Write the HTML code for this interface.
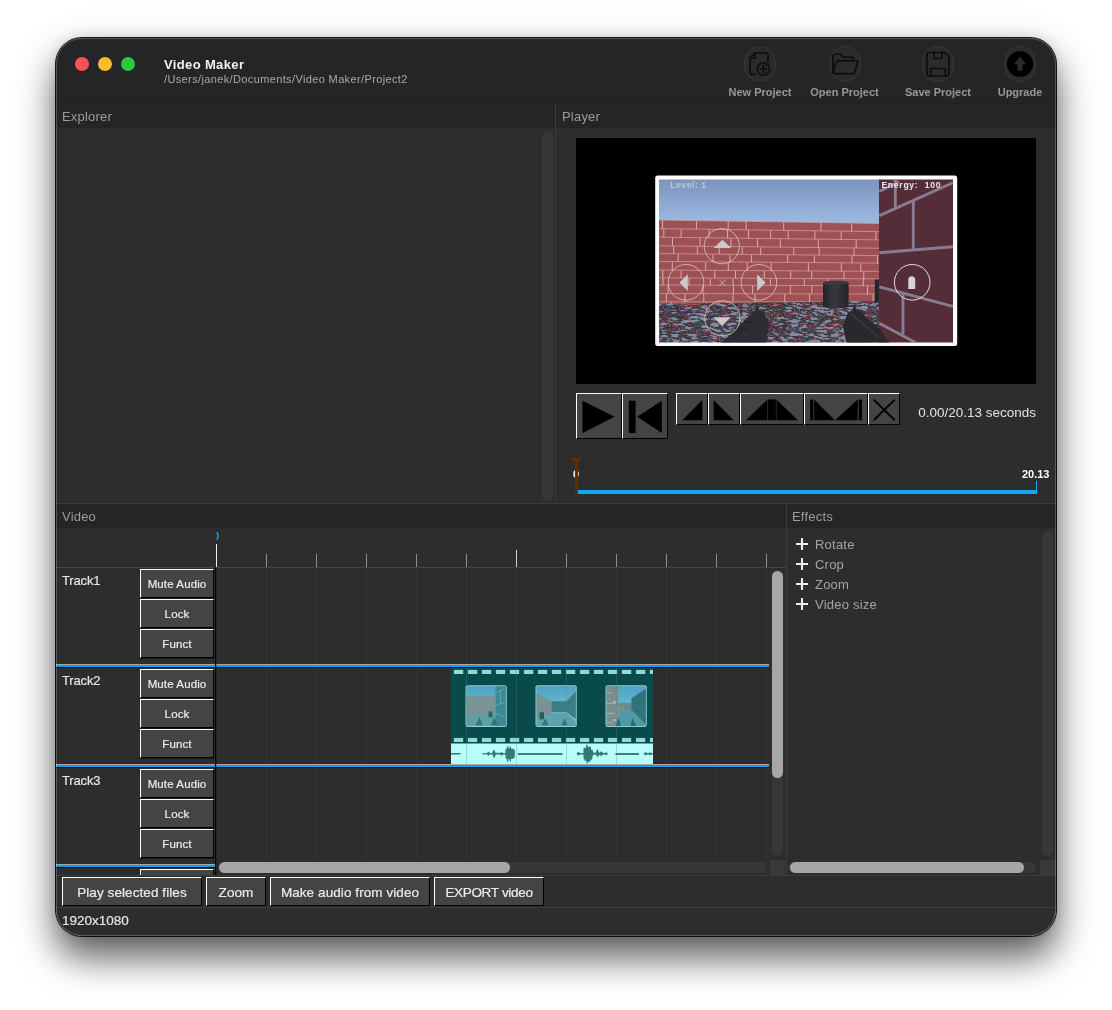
<!DOCTYPE html>
<html lang="en"><head><meta charset="utf-8"><title>Video Maker</title>
<style>
html,body{margin:0;padding:0;background:#fff;}
body{width:1112px;height:1010px;position:relative;overflow:hidden;font-family:"Liberation Sans",sans-serif;}
#win{position:absolute;left:56px;top:38px;width:1000px;height:898px;border-radius:26px;background:#2d2d2d;overflow:hidden;will-change:transform;
}
#shadow{position:absolute;left:56px;top:38px;width:1000px;height:898px;border-radius:26px;
 box-shadow:0 0 0 1px rgba(0,0,0,.9),0 22px 36px rgba(0,0,0,.6),0 0 14px rgba(0,0,0,.12),0 6px 50px rgba(0,0,0,.08);}
#rim{position:absolute;left:0;top:0;width:998px;height:896px;border-radius:26px;border:1px solid rgba(255,255,255,.22);pointer-events:none;z-index:50}
.abs{position:absolute}
#titlebar{left:0;top:0;width:1000px;height:65px;background:#232527;border-bottom:1px solid #1d1f20}
.tl{width:14px;height:14px;border-radius:50%;top:19px}
.hdr{background:#252525;height:24px;color:#9b9b9b;font-size:13px;line-height:26px;text-indent:6px;letter-spacing:.2px;overflow:hidden}
.line{background:#3c3c3c}
.btn{background:#444;box-sizing:border-box;border-top:1px solid #fff;border-left:1px solid #fff;border-right:1px solid #000;border-bottom:1px solid #000;color:#ececec;text-align:center;white-space:nowrap}
.tbtn{font-size:11.5px;letter-spacing:.12px;line-height:29px;-webkit-text-stroke:.2px #ececec;overflow:hidden;width:74px;height:29px;left:84px;box-shadow:0 1px 0 rgba(0,0,0,.45)}
.bbtn{font-size:13.5px;line-height:29px;overflow:hidden;letter-spacing:.08px;-webkit-text-stroke:.2px #ececec;height:29px;top:839px}
.track{left:6px;color:#e4e4e4;font-size:13px;letter-spacing:-.15px;-webkit-text-stroke:.2px #e4e4e4;}
.tlab{color:#989898;font-size:11px;font-weight:bold;top:48px;white-space:nowrap;transform:translateX(-50%)}
.fx{left:759px;color:#a4a4a4;font-size:13px;white-space:nowrap;letter-spacing:.22px;margin-top:1px}
.sb{background:#373737;border-radius:6px}
.thumb{background:#a6a6a6;border-radius:6px}
</style></head>
<body>
<div id="shadow"></div>
<div id="win">
<div id="titlebar" class="abs"></div>
<div class="abs tl" style="left:19px;background:#ff5257"></div>
<div class="abs tl" style="left:42px;background:#fdbc2e"></div>
<div class="abs tl" style="left:65px;background:#28c840"></div>
<div class="abs" style="left:108px;top:19px;font-size:13px;font-weight:bold;color:#f2f2f2;white-space:nowrap;letter-spacing:.36px">Video Maker</div>
<div class="abs" style="left:108px;top:35px;font-size:11px;color:#a9a9a9;white-space:nowrap;letter-spacing:.37px">/Users/janek/Documents/Video Maker/Project2</div>
<div class="abs" style="left:688px;top:8px;width:30px;height:34px;border-radius:16px;background:#292b2d;border:1px solid #35383a"></div>
<svg class="abs" style="left:688px;top:8px" width="32" height="36" viewBox="-16 -18 32 36" fill="none" stroke="#0c0c0c" stroke-width="1.6" stroke-linejoin="round" stroke-linecap="round"><path d="M-4.6 10.4 H-8 a2 2 0 0 1 -2 -2 V-6 L-5 -11 H6 a2 2 0 0 1 2 2 V-2.4"/><path d="M-9.8 -5.8 H-4.8 V-10.8"/><circle cx="3.3" cy="5" r="6.2"/><path d="M3.3 1.6 V8.4 M-0.1 5 H6.7"/></svg>
<div class="abs tlab" style="left:704px">New Project</div>
<div class="abs" style="left:772.5px;top:8px;width:30px;height:34px;border-radius:16px;background:#292b2d;border:1px solid #35383a"></div>
<svg class="abs" style="left:772.5px;top:8px" width="32" height="36" viewBox="-16 -18 32 36" fill="none" stroke="#0c0c0c" stroke-width="1.6" stroke-linejoin="round" stroke-linecap="round"><path d="M-12 8.5 V-8 a1.8 1.8 0 0 1 1.8 -1.8 H-5 L-2.5 -7 H6.5 a1.8 1.8 0 0 1 1.8 1.8 V-3.2"/><path d="M-12 8.5 L-8.6 -2 a1.8 1.8 0 0 1 1.7 -1.2 H11.6 a1.2 1.2 0 0 1 1.1 1.6 L9.6 8.4 a1.8 1.8 0 0 1 -1.7 1.2 H-10.8 a1.2 1.2 0 0 1 -1.2 -1.1 Z"/></svg>
<div class="abs tlab" style="left:788.5px">Open Project</div>
<div class="abs" style="left:866px;top:8px;width:30px;height:34px;border-radius:16px;background:#292b2d;border:1px solid #35383a"></div>
<svg class="abs" style="left:866px;top:8px" width="32" height="36" viewBox="-16 -18 32 36" fill="none" stroke="#0c0c0c" stroke-width="1.6" stroke-linejoin="round" stroke-linecap="round"><path d="M-11 -9.5 a2 2 0 0 1 2 -2 H7 L11 -7.5 V10 a2 2 0 0 1 -2 2 H-9 a2 2 0 0 1 -2 -2 Z"/><path d="M-4 -11.5 V-5.5 H4 V-11.5"/><path d="M-7.5 12 V4.5 H7.5 V12"/></svg>
<div class="abs tlab" style="left:882px">Save Project</div>
<div class="abs" style="left:948px;top:8px;width:30px;height:34px;border-radius:16px;background:#292b2d;border:1px solid #35383a"></div>
<svg class="abs" style="left:948px;top:8px" width="32" height="36" viewBox="-16 -18 32 36" fill="none" stroke="#0c0c0c" stroke-width="1.6" stroke-linejoin="round" stroke-linecap="round"><circle cx="0" cy="0" r="13" fill="#000" stroke="none"/><path d="M0 -7.5 L6.2 0.3 H2.7 V6.8 H-2.7 V0.3 H-6.2 Z" fill="#292b2d" stroke="none"/></svg>
<div class="abs tlab" style="left:964px">Upgrade</div>
<div class="abs hdr" style="left:0;top:66px;width:499px">Explorer</div>
<div class="abs hdr" style="left:500px;top:66px;width:500px">Player</div>
<div class="abs line" style="left:499px;top:66px;width:1px;height:399px"></div>
<div class="abs sb" style="left:486px;top:93px;width:11px;height:370px"></div>
<div class="abs" style="left:520px;top:100px;width:460px;height:246px;background:#000"></div>
<svg class="abs" style="left:599px;top:137px" width="303" height="172" viewBox="655 175 303 172" font-family="Liberation Sans, sans-serif"><defs><linearGradient id="sky" x1="0" y1="0" x2="0" y2="1"><stop offset="0" stop-color="#7b93bd"/><stop offset="1" stop-color="#9dbbe2"/></linearGradient><pattern id="brk" patternUnits="userSpaceOnUse" x="659" y="220" width="27" height="16"><rect width="27" height="16" fill="#9d5154"/><path d="M0 0.5 H27 M0 8.5 H27" stroke="#cfa09d" stroke-width=".7"/><path d="M4.5 1 V8 M18 9 V16" stroke="#e0bab4" stroke-width=".8"/></pattern><pattern id="cob" patternUnits="userSpaceOnUse" x="659" y="300" width="11" height="7"><rect width="11" height="7" fill="#a2524e"/><ellipse cx="2.7" cy="1.7" rx="2.6" ry="1.4" fill="#5a606c"/><ellipse cx="2.4" cy="1.3" rx="1.6" ry=".6" fill="#8f99a8"/><ellipse cx="8.2" cy="5.2" rx="2.6" ry="1.4" fill="#4e535e"/><ellipse cx="7.9" cy="4.8" rx="1.6" ry=".6" fill="#8a94a4"/><ellipse cx="8.2" cy="1.7" rx="2.4" ry="1.3" fill="#666c78"/><ellipse cx="2.7" cy="5.2" rx="2.4" ry="1.3" fill="#5f6570"/></pattern><filter id="cobf" x="0" y="0" width="100%" height="100%" color-interpolation-filters="sRGB"><feTurbulence type="turbulence" baseFrequency="0.10 0.30" numOctaves="2" seed="7"/><feColorMatrix type="matrix" values="2.5 0 0 0 0  2.5 0 0 0 0  2.5 0 0 0 0  0 0 0 0 1"/><feComponentTransfer><feFuncR type="table" tableValues="0.78 0.60 0.32 0.20 0.22 0.27 0.34 0.43 0.52"/><feFuncG type="table" tableValues="0.32 0.28 0.24 0.21 0.23 0.28 0.36 0.45 0.54"/><feFuncB type="table" tableValues="0.30 0.28 0.26 0.25 0.28 0.34 0.43 0.53 0.62"/></feComponentTransfer></filter><filter id="bl" x="-5%" y="-5%" width="110%" height="110%"><feGaussianBlur stdDeviation="0.7"/></filter><linearGradient id="bar" x1="0" y1="0" x2="1" y2="0"><stop offset="0" stop-color="#232327"/><stop offset=".45" stop-color="#37373c"/><stop offset="1" stop-color="#242428"/></linearGradient><clipPath id="gc"><rect x="659" y="179.4" width="294" height="163.2"/></clipPath></defs><rect x="655.2" y="175.5" width="302" height="170.6" rx="2.5" fill="#fff"/><g clip-path="url(#gc)"><rect x="659" y="179" width="221" height="45" fill="url(#sky)"/><path d="M659 220 L879 223.4 V304 H659 Z" fill="#9d5154"/><g clip-path="url(#wc)"><path d="M659 220.0 L879 223.4 M659 228.6 L879 231.7 M659 237.2 L879 239.9 M659 245.8 L879 248.2 M659 253.6 L879 255.6 M659 261.4 L879 263.1 M659 270.0 L879 271.4 M659 277.8 L879 278.9 M659 285.0 L879 285.8 M659 293.6 L879 294.0 M659 301.8 L879 301.9" stroke="#cfa09d" stroke-width=".75" fill="none"/><path d="M662.6 220.5 V228.7 M696.6 221.0 V229.2 M728.2 221.5 V229.7 M746.1 221.7 V229.9 M783.7 222.3 V230.5 M821.0 222.9 V231.1 M851.7 223.4 V231.6 M663.8 229.1 V237.3 M681.1 229.3 V237.5 M709.2 229.7 V237.9 M727.5 230.0 V238.2 M748.5 230.2 V238.4 M770.6 230.5 V238.7 M788.2 230.8 V239.0 M814.9 231.2 V239.4 M841.2 231.5 V239.7 M875.9 232.0 V240.2 M672.5 237.8 V246.0 M700.0 238.1 V246.3 M730.9 238.5 V246.7 M757.5 238.8 V247.0 M780.4 239.1 V247.3 M818.3 239.6 V247.8 M856.2 240.0 V248.2 M673.7 246.4 V253.8 M697.4 246.6 V254.0 M719.2 246.8 V254.2 M742.3 247.1 V254.5 M760.7 247.3 V254.7 M793.8 247.6 V255.0 M819.2 247.9 V255.3 M854.0 248.3 V255.7 M678.2 254.2 V261.6 M713.0 254.5 V261.9 M730.0 254.7 V262.1 M751.5 254.9 V262.3 M787.6 255.2 V262.6 M814.4 255.4 V262.8 M852.0 255.8 V263.2 M877.4 256.0 V263.4 M672.3 261.9 V270.1 M705.7 262.2 V270.4 M728.3 262.3 V270.5 M747.2 262.5 V270.7 M771.2 262.7 V270.9 M808.4 263.0 V271.2 M841.3 263.2 V271.4 M860.8 263.4 V271.6 M662.8 270.4 V277.8 M681.1 270.5 V277.9 M714.8 270.7 V278.1 M735.5 270.9 V278.3 M764.3 271.1 V278.5 M790.7 271.2 V278.6 M811.7 271.4 V278.8 M844.1 271.6 V279.0 M863.8 271.7 V279.1 M663.1 278.2 V285.0 M688.9 278.3 V285.1 M710.4 278.4 V285.2 M733.1 278.6 V285.4 M770.5 278.7 V285.5 M804.3 278.9 V285.7 M827.7 279.0 V285.8 M863.3 279.2 V286.0 M668.1 285.4 V293.6 M703.0 285.6 V293.8 M733.5 285.7 V293.9 M752.6 285.7 V293.9 M790.4 285.9 V294.1 M811.9 285.9 V294.1 M834.3 286.0 V294.2 M867.5 286.1 V294.3 M666.3 294.0 V301.8 M684.9 294.0 V301.8 M703.8 294.1 V301.9 M733.0 294.1 V301.9 M755.1 294.2 V302.0 M784.7 294.2 V302.0 M809.5 294.3 V302.1 M836.1 294.3 V302.1 M873.2 294.4 V302.2 M671.3 302.2 V304.0 M706.5 302.2 V304.0 M727.4 302.2 V304.0 M747.6 302.2 V304.0 M783.7 302.3 V304.1 M817.9 302.3 V304.1 M840.1 302.3 V304.1 M861.1 302.3 V304.1" stroke="#e2bdb7" stroke-width=".85" fill="none"/></g><clipPath id="fc"><path d="M659 304 L879 301 V343 H659 Z"/></clipPath><g clip-path="url(#fc)"><rect x="655" y="296" width="230" height="54" filter="url(#cobf)"/></g><rect x="874.8" y="279.5" width="5" height="23" fill="#26262a"/><path d="M823 283 V306 a12.8 2.6 0 0 0 25.6 0 V283 Z" fill="url(#bar)"/><ellipse cx="835.8" cy="283" rx="12.8" ry="2.3" fill="#38383d"/><rect x="879" y="179" width="74" height="164" fill="#542d38"/><g stroke="#887b92" stroke-width="2.9" fill="none" filter="url(#bl)"><path d="M879.3 191.5 L899 181.5 M879.3 215.6 L952.9 182.8 M879.3 252.8 L952.9 246.8 M879.3 286.8 L952.9 306.4 M879.3 323.3 L916 342.8"/><path d="M895.3 179.8 V207.5 M913.3 200 V249.5 M903 293.5 V334"/></g><path d="M721 343 L755.3 310.5 L756.3 306 L758.5 306 L759.2 310 L763.7 311.5 L769.4 325.5 L765.8 343 Z" fill="#2c2c32"/><path d="M737 329 L748 329 M743 322 L752 322" stroke="#1b1b1f" stroke-width=".8"/><path d="M846.5 343 L842.8 326 L848 312.5 L852.8 310 L853.4 306 L855.3 306 L856.6 309.8 L859.5 311 L879.5 328.5 L889.5 343 Z" fill="#28282d"/><path d="M850 313 L878 337" stroke="#3c3c43" stroke-width="1.2"/></g><g fill="none" stroke="#dcc6c6" stroke-width=".9" opacity=".9"><circle cx="721.8" cy="246.2" r="17.6"/><circle cx="686" cy="282.3" r="17.8"/><circle cx="758.9" cy="282.3" r="17.8"/><circle cx="722.4" cy="318.3" r="17.6"/><path d="M719.4 279.8 L725.4 285.8 M725.4 279.8 L719.4 285.8"/></g><circle cx="912.2" cy="282.3" r="17.8" fill="none" stroke="#e6dede" stroke-width="1"/><g fill="#cacaca"><path d="M722.4 239.8 L731.2 248.1 H713.6 Z"/><path d="M679.5 282.6 L687.8 274.3 V291 Z"/><path d="M765.6 282.6 L757.2 274.3 V291 Z"/><path d="M713.3 317.2 H730.7 L722 325.9 Z"/><path d="M908.3 289 V279.8 a3.45 3.6 0 0 1 6.9 0 V289 Z" fill="#d8d4d6"/></g><text x="670.2" y="188.4" font-size="8.6" font-weight="bold" fill="#c6cbd9" letter-spacing=".55" opacity=".9">Level: 1</text><text x="881.4" y="188.4" font-size="8.6" font-weight="bold" fill="#eeeaf0" letter-spacing=".72" xml:space="preserve">Energy:  100</text></svg>
<div class="abs btn" style="left:520px;top:355px;width:46px;height:46px"></div>
<div class="abs btn" style="left:566px;top:355px;width:46px;height:46px"></div>
<div class="abs btn" style="left:620px;top:355px;width:32px;height:32px"></div>
<div class="abs btn" style="left:652px;top:355px;width:32px;height:32px"></div>
<div class="abs btn" style="left:684px;top:355px;width:64px;height:32px"></div>
<div class="abs btn" style="left:748px;top:355px;width:64px;height:32px"></div>
<div class="abs btn" style="left:812px;top:355px;width:32px;height:32px"></div>
<svg class="abs" style="left:520px;top:355px" width="330" height="50" viewBox="576 393 330 50"><path d="M582.5 400.7 L614.6 416.8 L582.5 433 Z" fill="#000"/><rect x="628.8" y="400.7" width="6.8" height="32.3" fill="#000"/><path d="M661.8 400.7 L637.2 416.8 L661.8 433 Z" fill="#000"/><path d="M682.2 420.2 H702.3 V400 Z" fill="#000"/><path d="M713.6 400 V420.2 H733.7 Z" fill="#000"/><path d="M745.9 420.3 L767.4 399.6 H776.3 L798 420.3 Z" fill="#000"/><path d="M767.6 399.6 V420.3 M776.3 399.6 V420.3" stroke="#3a3a3a" stroke-width="0.7"/><rect x="810.1" y="399.6" width="3.2" height="20.7" fill="#000"/><path d="M814.2 399.6 V420.3 H835 Z" fill="#000"/><path d="M835 420.3 H857.7 V399.6 Z" fill="#000"/><rect x="858.7" y="399.6" width="3.2" height="20.7" fill="#000"/><path d="M873.7 399.6 L894.8 420.3 M894.8 399.6 L873.7 420.3" stroke="#000" stroke-width="1.9"/></svg>
<div class="abs" style="left:800px;top:367px;width:180px;text-align:right;font-size:13.5px;color:#e2e2e2;white-space:nowrap">0.00/20.13 seconds</div>
<div class="abs" style="left:514px;top:430px;width:12px;text-align:center;font-size:11px;font-weight:bold;color:#fff">0</div>
<div class="abs" style="left:522px;top:452px;width:459px;height:4px;background:#0fa9f7;box-shadow:0 0 0 .5px #3a2a22"></div>
<div class="abs" style="left:980px;top:443px;width:1px;height:13px;background:#0fa9f7"></div>
<svg class="abs" style="left:512px;top:418px" width="16" height="40" viewBox="568 456 16 40"><path d="M569.8 458 H582.2 L578 462.6 V494 H575 V462.6 Z" fill="#5e2e08"/></svg>
<div class="abs" style="left:960px;top:430px;width:40px;text-align:center;font-size:11px;font-weight:bold;color:#fff;transform:translateX(-0.3px)">20.13</div>
<div class="abs line" style="left:0;top:465px;width:1000px;height:1px"></div>
<div class="abs hdr" style="left:0;top:466px;width:730px">Video</div>
<div class="abs hdr" style="left:731px;top:466px;width:269px;text-indent:5px">Effects</div>
<div class="abs line" style="left:730px;top:466px;width:1px;height:372px"></div>
<div class="abs" style="left:0;top:529px;width:730px;height:1px;background:#454545"></div>
<div class="abs" style="left:210px;top:516px;width:1px;height:13px;background:#8f8f8f"></div>
<div class="abs" style="left:210px;top:530px;width:1px;height:292px;background:#353535"></div>
<div class="abs" style="left:260px;top:516px;width:1px;height:13px;background:#8f8f8f"></div>
<div class="abs" style="left:260px;top:530px;width:1px;height:292px;background:#353535"></div>
<div class="abs" style="left:310px;top:516px;width:1px;height:13px;background:#8f8f8f"></div>
<div class="abs" style="left:310px;top:530px;width:1px;height:292px;background:#353535"></div>
<div class="abs" style="left:360px;top:516px;width:1px;height:13px;background:#8f8f8f"></div>
<div class="abs" style="left:360px;top:530px;width:1px;height:292px;background:#353535"></div>
<div class="abs" style="left:410px;top:516px;width:1px;height:13px;background:#8f8f8f"></div>
<div class="abs" style="left:410px;top:530px;width:1px;height:292px;background:#353535"></div>
<div class="abs" style="left:460px;top:512px;width:1px;height:17px;background:#d0d0d0"></div>
<div class="abs" style="left:460px;top:530px;width:1px;height:292px;background:#353535"></div>
<div class="abs" style="left:510px;top:516px;width:1px;height:13px;background:#8f8f8f"></div>
<div class="abs" style="left:510px;top:530px;width:1px;height:292px;background:#353535"></div>
<div class="abs" style="left:560px;top:516px;width:1px;height:13px;background:#8f8f8f"></div>
<div class="abs" style="left:560px;top:530px;width:1px;height:292px;background:#353535"></div>
<div class="abs" style="left:610px;top:516px;width:1px;height:13px;background:#8f8f8f"></div>
<div class="abs" style="left:610px;top:530px;width:1px;height:292px;background:#353535"></div>
<div class="abs" style="left:660px;top:516px;width:1px;height:13px;background:#8f8f8f"></div>
<div class="abs" style="left:660px;top:530px;width:1px;height:292px;background:#353535"></div>
<div class="abs" style="left:710px;top:516px;width:1px;height:13px;background:#8f8f8f"></div>
<div class="abs" style="left:710px;top:530px;width:1px;height:292px;background:#353535"></div>
<div class="abs" style="left:160px;top:506px;width:1px;height:23px;background:#f0f0f0"></div>
<svg class="abs" style="left:158px;top:492px" width="8" height="12" viewBox="0 0 8 12"><path d="M2.6 2.2 Q5.7 6 2.6 9.8" fill="none" stroke="#1aa2ee" stroke-width="1.4"/></svg>
<div class="abs track" style="top:535px">Track1</div>
<div class="abs btn tbtn" style="top:531px">Mute Audio</div>
<div class="abs btn tbtn" style="top:561px">Lock</div>
<div class="abs btn tbtn" style="top:591px">Funct</div>
<div class="abs" style="left:0;top:626px;width:713px;height:1px;background:#a9a4a6"></div>
<div class="abs" style="left:0;top:627px;width:713px;height:2px;background:#109ff0"></div>
<div class="abs" style="left:0;top:629px;width:713px;height:1px;background:#111"></div>
<div class="abs track" style="top:635px">Track2</div>
<div class="abs btn tbtn" style="top:631px">Mute Audio</div>
<div class="abs btn tbtn" style="top:661px">Lock</div>
<div class="abs btn tbtn" style="top:691px">Funct</div>
<div class="abs" style="left:0;top:726px;width:713px;height:1px;background:#a9a4a6"></div>
<div class="abs" style="left:0;top:727px;width:713px;height:2px;background:#109ff0"></div>
<div class="abs" style="left:0;top:729px;width:713px;height:1px;background:#111"></div>
<div class="abs track" style="top:735px">Track3</div>
<div class="abs btn tbtn" style="top:731px">Mute Audio</div>
<div class="abs btn tbtn" style="top:761px">Lock</div>
<div class="abs btn tbtn" style="top:791px">Funct</div>
<div class="abs" style="left:0;top:826px;width:159px;height:1px;background:#a9a4a6"></div>
<div class="abs" style="left:0;top:827px;width:159px;height:2px;background:#109ff0"></div>
<div class="abs" style="left:0;top:829px;width:159px;height:1px;background:#111"></div>
<div class="abs" style="left:84px;top:831px;width:74px;height:6px;overflow:hidden"><div class="abs btn tbtn" style="left:0;top:0"></div></div>
<div class="abs" style="left:159px;top:529px;width:1px;height:308px;background:#050505;box-shadow:1px 0 0 rgba(0,0,0,.22)"></div>
<svg class="abs" style="left:395px;top:630px" width="202" height="96" viewBox="451 668 202 96"><defs><clipPath id="cc"><rect x="451" y="668" width="202" height="96"/></clipPath><linearGradient id="tsky" x1="0" y1="0" x2="0" y2="1"><stop offset="0" stop-color="#4da3c4"/><stop offset="1" stop-color="#86cfdf"/></linearGradient></defs><g clip-path="url(#cc)"><rect x="451" y="668" width="202" height="76" fill="#094a4a"/><rect x="451" y="743.5" width="202" height="20.5" fill="#b9fdfd"/><rect x="453.9" y="669.9" width="9.3" height="4.1" fill="#8fdad5"/><rect x="453.9" y="737.9" width="9.3" height="4.1" fill="#8fdad5"/><rect x="467.9" y="669.9" width="9.3" height="4.1" fill="#8fdad5"/><rect x="467.9" y="737.9" width="9.3" height="4.1" fill="#8fdad5"/><rect x="481.9" y="669.9" width="9.3" height="4.1" fill="#8fdad5"/><rect x="481.9" y="737.9" width="9.3" height="4.1" fill="#8fdad5"/><rect x="495.9" y="669.9" width="9.3" height="4.1" fill="#8fdad5"/><rect x="495.9" y="737.9" width="9.3" height="4.1" fill="#8fdad5"/><rect x="509.9" y="669.9" width="9.3" height="4.1" fill="#8fdad5"/><rect x="509.9" y="737.9" width="9.3" height="4.1" fill="#8fdad5"/><rect x="523.9" y="669.9" width="9.3" height="4.1" fill="#8fdad5"/><rect x="523.9" y="737.9" width="9.3" height="4.1" fill="#8fdad5"/><rect x="537.9" y="669.9" width="9.3" height="4.1" fill="#8fdad5"/><rect x="537.9" y="737.9" width="9.3" height="4.1" fill="#8fdad5"/><rect x="551.9" y="669.9" width="9.3" height="4.1" fill="#8fdad5"/><rect x="551.9" y="737.9" width="9.3" height="4.1" fill="#8fdad5"/><rect x="565.9" y="669.9" width="9.3" height="4.1" fill="#8fdad5"/><rect x="565.9" y="737.9" width="9.3" height="4.1" fill="#8fdad5"/><rect x="579.9" y="669.9" width="9.3" height="4.1" fill="#8fdad5"/><rect x="579.9" y="737.9" width="9.3" height="4.1" fill="#8fdad5"/><rect x="593.9" y="669.9" width="9.3" height="4.1" fill="#8fdad5"/><rect x="593.9" y="737.9" width="9.3" height="4.1" fill="#8fdad5"/><rect x="607.9" y="669.9" width="9.3" height="4.1" fill="#8fdad5"/><rect x="607.9" y="737.9" width="9.3" height="4.1" fill="#8fdad5"/><rect x="621.9" y="669.9" width="9.3" height="4.1" fill="#8fdad5"/><rect x="621.9" y="737.9" width="9.3" height="4.1" fill="#8fdad5"/><rect x="635.9" y="669.9" width="9.3" height="4.1" fill="#8fdad5"/><rect x="635.9" y="737.9" width="9.3" height="4.1" fill="#8fdad5"/><rect x="649.9" y="669.9" width="9.3" height="4.1" fill="#8fdad5"/><rect x="649.9" y="737.9" width="9.3" height="4.1" fill="#8fdad5"/><g transform="translate(465.5,685.3)"><rect x="0" y="0" width="41.3" height="41.6" rx="2" fill="#8bcfcf"/><rect x="1" y="1" width="39.3" height="39.6" rx="1" fill="url(#tsky)"/><rect x="1" y="11" width="29" height="19" fill="#7a9496"/><rect x="1" y="29" width="39.3" height="11.6" fill="#5f9ea4"/><path d="M30 1 H40.3 V40.6 H30 Z" fill="#3f8890"/><path d="M30 8 L40 3 M30 20 L40 17 M30 28 L40 32 M35 5 V19" stroke="#5fb6c6" stroke-width=".7" fill="none"/><rect x="23" y="26" width="4" height="6" fill="#26666a"/><path d="M10 40 L14 32 L17 40 Z M25 40 L29 32 L32 40 Z" fill="#2f7478"/></g><g transform="translate(535.5,685.3)"><rect x="0" y="0" width="41.3" height="41.6" rx="2" fill="#8bcfcf"/><rect x="1" y="1" width="39.3" height="39.6" rx="1" fill="url(#tsky)"/><path d="M1 8 L16 16 V30 L1 34 Z" fill="#7a9294"/><path d="M16 16 H31 L40.3 6 V34 L31 27 H16 Z" fill="#3c7c84"/><path d="M1 34 L16 28 H31 L40.3 36 V40.6 H1 Z" fill="#5fa2aa"/><rect x="4" y="27" width="4.5" height="7" fill="#235f63"/><path d="M6 40 L10 33 L13 40 Z M26 40 L29 33 L32 40 Z" fill="#2f7478"/></g><g transform="translate(605.5,685.3)"><rect x="0" y="0" width="41.3" height="41.6" rx="2" fill="#8bcfcf"/><rect x="1" y="1" width="39.3" height="39.6" rx="1" fill="url(#tsky)"/><path d="M1 1 H12.5 L13.5 40.6 H1 Z" fill="#7b8e8f"/><path d="M13 17.5 H26.5 V25 H13.3 Z" fill="#6d8b8c"/><rect x="14" y="22.3" width="4.5" height="2.2" fill="#8b9a55"/><path d="M26 13 L40.3 3.5 V40 L26 27 Z" fill="#30737a"/><path d="M13.3 24.5 H26 L40.3 39 V40.6 H13.5 Z" fill="#4e9aa6"/><path d="M1 7.5 H7 M1 18 H10 M1 28 H9 M1 37 H7" stroke="#a4c4c6" stroke-width=".8"/><rect x="8" y="16" width="2" height="1.6" fill="#b9dede"/><rect x="8" y="34" width="2" height="1.6" fill="#b9dede"/><path d="M10.5 40.6 L13 32 L15.5 40.6 Z M25 40.6 L27 32.5 L30.5 40.6 Z" fill="#246d72"/></g><g fill="#347a7a"><path d="M451 753.0999999999999 H461.5 L460 754.5999999999999 H451 Z"/><path d="M481.5 753.1999999999999 H486.5 L488.5 751.8 L490 753.0 H492 L494 749.3 L495.5 752.8 H499 L500 753.3 L501.5 751.8 L503 753.0999999999999 H505.5 V748.8 H507 V746.3 H508.3 V748.3 H509.6 V746.8 H511 V748.8 H513.8 V749.8 H514.8 V757.8 H513.5 V758.8 H511 V761.3 H509.6 V759.3 H508.3 V761.8 H507 V758.8 H505.5 V754.5999999999999 H503 L501.5 755.8 L500 754.4 H496 L494 758.8 L492.5 754.5999999999999 H490 L488.5 755.8 L487 754.5999999999999 H483 Z"/><rect x="518" y="753.0999999999999" width="44.5" height="1.9"/><path d="M576.5 753.4 L578 751.8 L580 753.0 H583.5 V747.8 H586 V744.8 H587.5 V746.8 H591 V749.8 H592.5 L593.5 752.8 H595.5 L597.5 748.8 L599 752.8 L601.5 751.3 L603 753.0 H605 L606.5 752.3 L608 753.8 L606.5 755.3 L605 754.5999999999999 H603 L601.5 756.3 L599.5 754.8 L597.5 757.3 L596 754.8 H593 L592 759.8 H590.5 V761.8 H588 V763.3 H586.5 V760.8 H584.5 V758.8 H583.5 V754.5999999999999 H580 L578 755.8 Z"/><rect x="615.5" y="753.0999999999999" width="23.5" height="1.9"/><path d="M643.5 753.8 L645.5 752.0 L647 753.0999999999999 H649 L650 752.0 L651 753.0999999999999 H653 V754.5999999999999 H651 L650 755.5999999999999 L649 754.5999999999999 H647 L645.5 755.5999999999999 Z"/></g><rect x="466" y="668" width="1" height="96" fill="#787878" opacity=".3"/><rect x="516" y="668" width="1" height="96" fill="#787878" opacity=".3"/><rect x="566" y="668" width="1" height="96" fill="#787878" opacity=".3"/><rect x="616" y="668" width="1" height="96" fill="#787878" opacity=".3"/></g></svg>
<div class="abs sb" style="left:716px;top:532px;width:11px;height:286px"></div>
<div class="abs thumb" style="left:716px;top:533px;width:11px;height:207px"></div>
<div class="abs" style="left:160.5px;top:822px;width:569.5px;height:15px;background:#2d2d2d"></div>
<div class="abs sb" style="left:162px;top:824px;width:549px;height:11px"></div>
<div class="abs thumb" style="left:163px;top:824px;width:291px;height:11px"></div>
<div class="abs" style="left:714px;top:822px;width:15px;height:15px;background:#383838"></div>
<svg class="abs" style="left:739px;top:499px" width="14" height="14" viewBox="-7 -7 14 14"><path d="M-6 0 H6 M0 -6 V6" stroke="#ececec" stroke-width="2.1"/></svg>
<div class="abs fx" style="top:498px">Rotate</div>
<svg class="abs" style="left:739px;top:519px" width="14" height="14" viewBox="-7 -7 14 14"><path d="M-6 0 H6 M0 -6 V6" stroke="#ececec" stroke-width="2.1"/></svg>
<div class="abs fx" style="top:518px">Crop</div>
<svg class="abs" style="left:739px;top:539px" width="14" height="14" viewBox="-7 -7 14 14"><path d="M-6 0 H6 M0 -6 V6" stroke="#ececec" stroke-width="2.1"/></svg>
<div class="abs fx" style="top:538px">Zoom</div>
<svg class="abs" style="left:739px;top:559px" width="14" height="14" viewBox="-7 -7 14 14"><path d="M-6 0 H6 M0 -6 V6" stroke="#ececec" stroke-width="2.1"/></svg>
<div class="abs fx" style="top:558px">Video size</div>
<div class="abs sb" style="left:986px;top:493px;width:11px;height:325px"></div>
<div class="abs sb" style="left:732px;top:824px;width:248px;height:11px"></div>
<div class="abs thumb" style="left:734px;top:824px;width:234px;height:11px"></div>
<div class="abs" style="left:984px;top:822px;width:16px;height:15px;background:#383838"></div>
<div class="abs line" style="left:0;top:837px;width:1000px;height:1px"></div>
<div class="abs btn bbtn" style="left:6px;width:140px">Play selected files</div>
<div class="abs btn bbtn" style="left:150px;width:60px">Zoom</div>
<div class="abs btn bbtn" style="left:214px;width:160px">Make audio from video</div>
<div class="abs btn bbtn" style="left:378px;width:110px;letter-spacing:-.32px">EXPORT video</div>
<div class="abs line" style="left:0;top:869px;width:1000px;height:1px"></div>
<div class="abs" style="left:6px;top:875px;font-size:13.5px;color:#e6e6e6;-webkit-text-stroke:.2px #e6e6e6">1920x1080</div>
<div id="rim" class="abs"></div>
</div>
</body></html>
